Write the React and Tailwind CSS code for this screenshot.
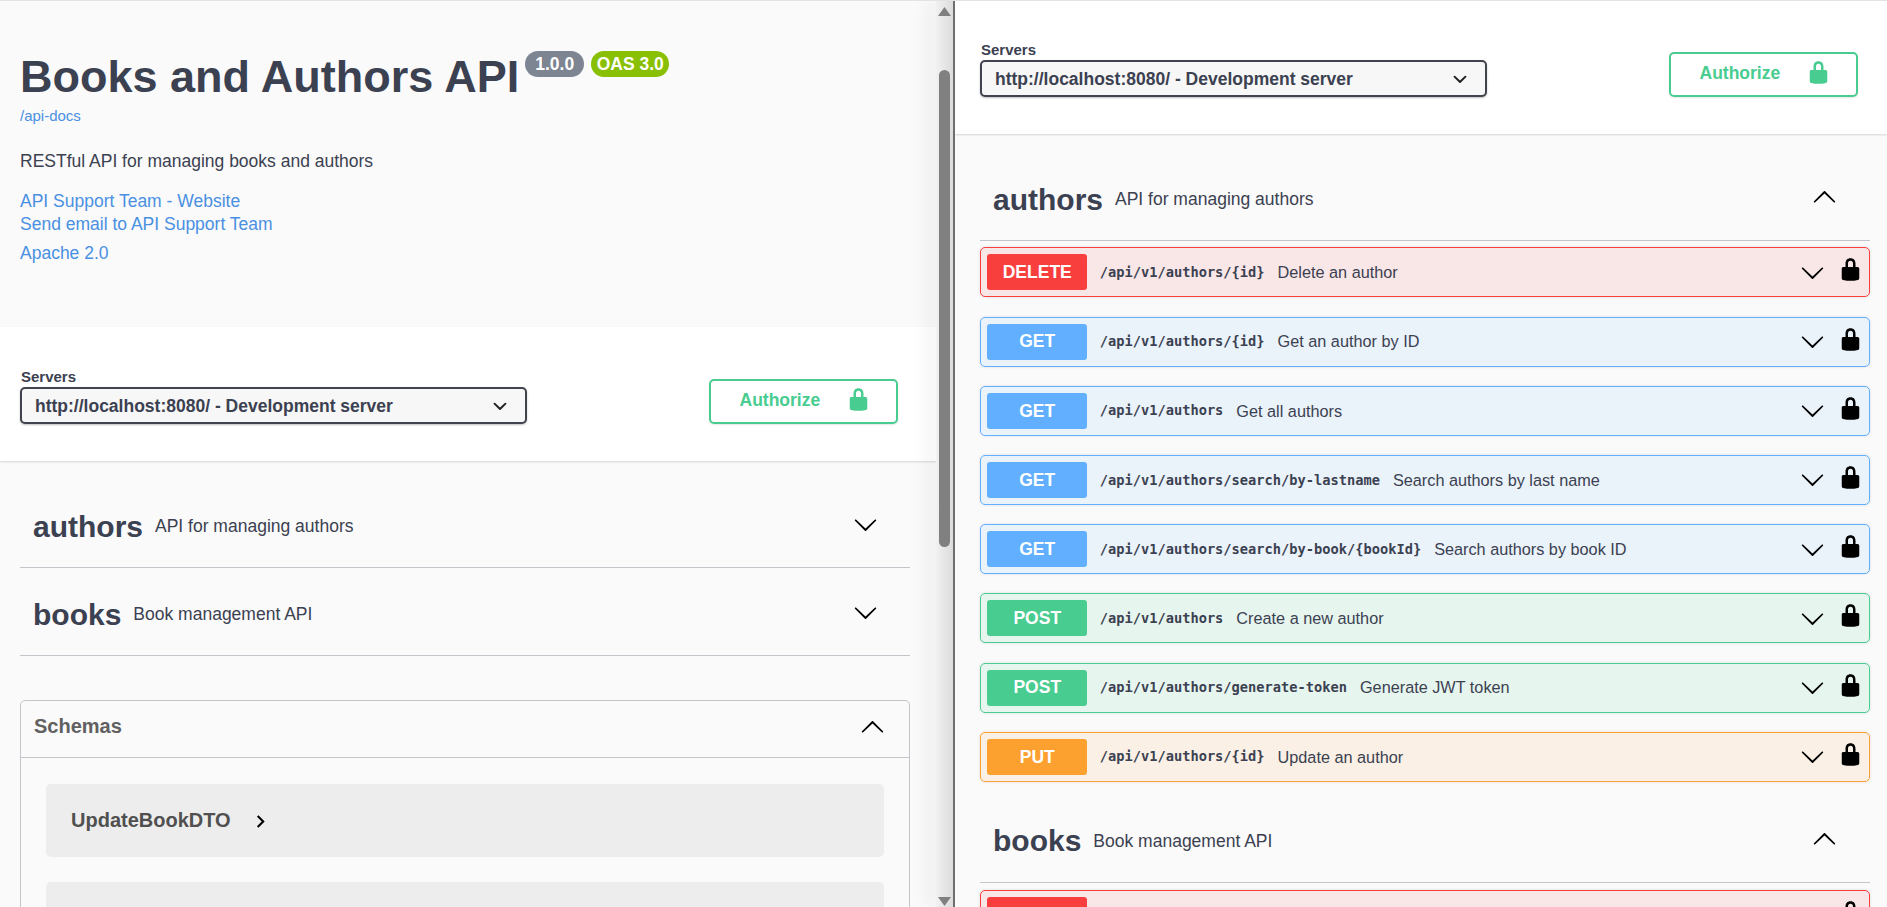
import React from 'react';

const ARROW = 'M17.418 6.109c.272-.268.709-.268.979 0s.271.701 0 .969l-7.908 7.83c-.27.268-.707.268-.979 0l-7.908-7.83c-.27-.268-.27-.701 0-.969.271-.268.709-.268.979 0L10 13.25l7.418-7.141z';
const LOCK = 'M15.8 8H14V5.6C14 2.703 12.665 1 10 1 7.334 1 6 2.703 6 5.6V8H4c-.553 0-1 .646-1 1.199V17c0 .549.428 1.139.951 1.307l1.197.387C5.672 18.861 6.55 19 7.1 19h5.8c.549 0 1.428-.139 1.951-.307l1.196-.387c.524-.167.953-.757.953-1.306V9.199C17 8.646 16.352 8 15.8 8zM12 8H8V5.199C8 3.754 8.797 3 10 3c1.203 0 2 .754 2 2.199V8z';
const SELECT_ARROW = 'M13.418 7.859a.695.695 0 0 1 .978 0 .68.68 0 0 1 0 .969l-3.908 3.83a.697.697 0 0 1-.979 0l-3.908-3.83a.68.68 0 0 1 0-.969.695.695 0 0 1 .978 0L10 11l3.418-3.141z';

const METHOD_STYLES = {
  DELETE: { row: 'border-[#f93e3e] bg-[#f93e3e1a]', button: 'bg-[#f93e3e]' },
  GET: { row: 'border-[#61affe] bg-[#61affe1a]', button: 'bg-[#61affe]' },
  POST: { row: 'border-[#49cc90] bg-[#49cc901a]', button: 'bg-[#49cc90]' },
  PUT: { row: 'border-[#fca130] bg-[#fca1301a]', button: 'bg-[#fca130]' },
};

const AUTHOR_OPS = [
  { method: 'DELETE', path: '/api/v1/authors/{id}', summary: 'Delete an author' },
  { method: 'GET', path: '/api/v1/authors/{id}', summary: 'Get an author by ID' },
  { method: 'GET', path: '/api/v1/authors', summary: 'Get all authors' },
  { method: 'GET', path: '/api/v1/authors/search/by-lastname', summary: 'Search authors by last name' },
  { method: 'GET', path: '/api/v1/authors/search/by-book/{bookId}', summary: 'Search authors by book ID' },
  { method: 'POST', path: '/api/v1/authors', summary: 'Create a new author' },
  { method: 'POST', path: '/api/v1/authors/generate-token', summary: 'Generate JWT token' },
  { method: 'PUT', path: '/api/v1/authors/{id}', summary: 'Update an author' },
];

function Icon({ d, size = 25, box = 20, className = '' }) {
  return (
    <svg viewBox={`0 0 ${box} ${box}`} width={size} height={size} className={`shrink-0 ${className}`} fill="currentColor">
      <path d={d} />
    </svg>
  );
}

function ServerBar({ className }) {
  return (
    <div className={`bg-white shadow-[0_1px_2px_rgba(0,0,0,0.15)] flex items-end justify-between relative ${className}`}>
      <div>
        <div className="text-[15px] leading-[18px] font-bold text-[#3b4151] pl-[1px] mb-[1px]">Servers</div>
        <div className="w-[507px] h-[37px] border-[2.5px] border-[#41444e] rounded-[5px] bg-[#f7f7f7] shadow-[0_1px_2px_rgba(0,0,0,0.25)] flex items-center justify-between pl-[13px] pr-[11px]">
          <span className="text-[17.5px] font-bold text-[#3b4151] pt-[2px]">http://localhost:8080/ - Development server</span>
          <Icon d={SELECT_ARROW} size={28} className="text-[#222]" />
        </div>
      </div>
      <div className="w-[189px] h-[45px] border-[2.5px] border-[#49cc90] rounded-[5px] flex items-center pl-[28.5px] text-[#49cc90] shadow-[0_1px_2px_rgba(0,0,0,0.1)]">
        <span className="text-[17.5px] font-bold mb-[3px]">Authorize</span>
        <Icon d={LOCK} className="ml-[26px] mb-[4px]" />
      </div>
    </div>
  );
}

function TagHeader({ name, description, open, className = '' }) {
  return (
    <div className={`h-[88px] border-b-[1.25px] border-[#c4c5ca] flex items-center justify-between pl-[13px] ${open ? 'pr-[33px]' : 'pr-[32px]'} ${className}`}>
      <div className="flex items-center text-[#3b4151]">
        <span className="text-[30px] font-bold leading-[36px] pt-[6px]">{name}</span>
        <span className="text-[17.5px] ml-[12px] mt-[6px]">{description}</span>
      </div>
      <Icon d={ARROW} className={open ? 'rotate-180 text-black mt-[2px]' : 'text-black mt-[2px]'} />
    </div>
  );
}

function OpRow({ method, label = method, path, summary }) {
  const styles = METHOD_STYLES[method];
  return (
    <div className={`h-[50px] shrink-0 border-[1.25px] rounded-[5px] flex items-center pl-[5.75px] pr-[6px] shadow-[0_0_3px_rgba(0,0,0,0.12)] ${styles.row}`}>
      <div className={`w-[100px] h-[36px] rounded-[3px] flex items-center justify-center text-white font-bold text-[17.5px] shrink-0 pl-[1px] ${styles.button}`}>
        {label}
      </div>
      <span className="ml-[13px] text-[13.7px] font-bold text-[#3b4151] [font-family:'DejaVu_Sans_Mono',monospace]">{path}</span>
      <span className="ml-[13px] text-[16.25px] text-[#3b4151]">{summary}</span>
      <div className="ml-auto flex items-center gap-[13px] text-black">
        <Icon d={ARROW} />
        <Icon d={LOCK} className="mb-[5px]" />
      </div>
    </div>
  );
}

function Scrollbar() {
  return (
    <div className="w-[17px] shrink-0 relative bg-gradient-to-r from-[#f1f1f1] to-[#dcdcdc] shadow-[-12px_0_14px_rgba(0,0,0,0.04)] flex flex-col items-center pt-[6px] pb-[1px]">
      <svg width="13" height="9" viewBox="0 0 13 9" fill="#808080"><path d="M6.5 0L13 9H0z" /></svg>
      <div className="w-[11px] h-[477px] mt-[54px] bg-[#808080] rounded-full" />
      <svg width="13" height="9" viewBox="0 0 13 9" fill="#808080" className="mt-auto"><path d="M0 0h13L6.5 9z" /></svg>
    </div>
  );
}

export default function App() {
  return (
    <div className="h-[907px] overflow-hidden flex bg-[#fafafa] border-t border-[#e3e3e3] [font-family:'Liberation_Sans',Arial,sans-serif]">
      {/* left pane */}
      <div className="w-[936px] shrink-0 overflow-hidden">
        <div className="h-[326px] pt-[48px] pl-[20px]">
          <div className="flex items-start text-[#3b4151]">
            <h1 className="text-[45px] leading-[56px] font-bold">Books and Authors API</h1>
            <span className="ml-[6px] mt-[2px] h-[26px] w-[59px] rounded-full bg-[#7d8492] text-white font-bold text-[17.5px] flex items-center justify-center">1.0.0</span>
            <span className="ml-[7px] mt-[2px] h-[26px] w-[78px] rounded-full bg-[#89bf04] text-white font-bold text-[17.5px] flex items-center justify-center">OAS 3.0</span>
          </div>
          <div className="mt-[1px] text-[15px] leading-[20px] text-[#4990e2]">/api-docs</div>
          <div className="mt-[23px] text-[17.5px] leading-[24px] text-[#3b4151]">RESTful API for managing books and authors</div>
          <div className="mt-[17px] text-[17.5px] leading-[23px] text-[#4990e2]">API Support Team - Website</div>
          <div className="text-[17.5px] leading-[23px] text-[#4990e2]">Send email to API Support Team</div>
          <div className="mt-[6px] text-[17.5px] leading-[23px] text-[#4990e2]">Apache 2.0</div>
        </div>
        <ServerBar className="h-[134px] pt-[42px] pb-[37px] pl-[20px] pr-[38px]" />
        <div className="pl-[20px] pr-[26px]">
          <TagHeader name="authors" description="API for managing authors" className="mt-[19px]" />
          <TagHeader name="books" description="Book management API" />
          <div className="mt-[44px] border-[1.25px] border-[#c4c5ca] rounded-[5px]">
            <div className="h-[57px] border-b-[1.25px] border-[#c4c5ca] flex items-center justify-between pl-[13px] pr-[24px] pb-[7px]">
              <span className="text-[20px] font-bold text-[#606060]">Schemas</span>
              <Icon d={ARROW} className="rotate-180 text-black mt-[3px]" />
            </div>
            <div className="px-[25px] pt-[26px] flex flex-col gap-[25px]">
              <div className="h-[73px] rounded-[5px] bg-[#ededed] flex items-center pl-[25px] text-[#505050]">
                <span className="text-[20px] font-bold mb-[2px]">UpdateBookDTO</span>
                <Icon d="M10 6L8.59 7.41 13.17 12l-4.58 4.59L10 18l6-6z" box={24} className="ml-[17px] mt-[2px] text-black" />
              </div>
              <div className="h-[73px] rounded-[5px] bg-[#ededed]" />
            </div>
          </div>
        </div>
      </div>

      <Scrollbar />
      <div className="w-[2px] shrink-0 bg-[#6e6e6e]" />

      {/* right pane */}
      <div className="flex-1 min-w-0 overflow-hidden">
        <ServerBar className="h-[133px] pt-[41px] pb-[37px] pl-[25px] pr-[29px]" />
        <div className="pl-[25px] pr-[17px]">
          <TagHeader name="authors" description="API for managing authors" open className="mt-[19px]" />
          <div className="mt-[6.4px] flex flex-col gap-[19.2px]">
            {AUTHOR_OPS.map((op) => (
              <OpRow key={op.method + op.path} {...op} />
            ))}
          </div>
          <TagHeader name="books" description="Book management API" open className="mt-[13.2px]" />
          <div className="mt-[7px]">
            <OpRow method="DELETE" label="" path="" summary="" />
          </div>
        </div>
      </div>
    </div>
  );
}
